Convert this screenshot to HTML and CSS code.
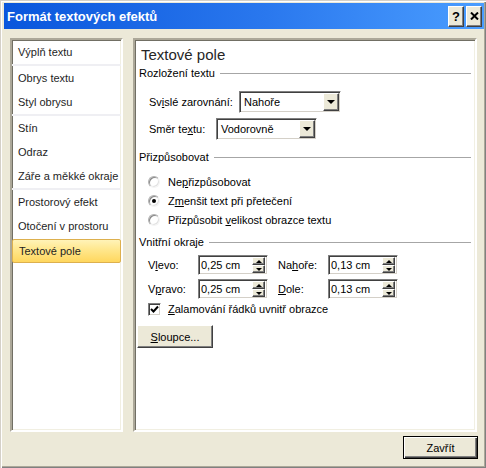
FILE: index.html
```html
<!DOCTYPE html>
<html lang="cs">
<head>
<meta charset="utf-8">
<title>Formát textových efektů</title>
<link rel="stylesheet" href="styles.css">
</head>
<body>
<div class="window">
  <div class="titlebar">
    <span class="title">Formát textových efektů</span>
    <div class="tb-buttons">
      <span class="tb-btn tb-help">?</span>
      <span class="tb-btn tb-close">
        <svg width="9" height="8" viewBox="0 0 9 8"><path d="M1 0.5 L8 7.5 M8 0.5 L1 7.5" stroke="#000" stroke-width="2" fill="none"/></svg>
      </span>
    </div>
  </div>
  <div class="main">
    <ul class="nav">
      <li class="nav-item">Výplň textu</li>
      <li class="nav-sep"></li>
      <li class="nav-item">Obrys textu</li>
      <li class="nav-item">Styl obrysu</li>
      <li class="nav-sep"></li>
      <li class="nav-item">Stín</li>
      <li class="nav-item">Odraz</li>
      <li class="nav-item">Záře a měkké okraje</li>
      <li class="nav-sep"></li>
      <li class="nav-item">Prostorový efekt</li>
      <li class="nav-item">Otočení v prostoru</li>
      <li class="nav-item nav-active">Textové pole</li>
    </ul>
    <div class="panel">
      <h1 class="heading">Textové pole</h1>

      <div class="section-title sec-first"><span>Rozložení textu</span></div>
      <div class="field-row row-valign">
        <span class="lbl lbl-valign">Sv<u>i</u>slé zarovnání:</span>
        <div class="combo combo-valign">
          <span class="combo-text">Nahoře</span>
          <span class="combo-btn"><i class="tri-down"></i></span>
        </div>
      </div>
      <div class="field-row row-dir">
        <span class="lbl lbl-dir">Směr te<u>x</u>tu:</span>
        <div class="combo combo-dir">
          <span class="combo-text">Vodorovně</span>
          <span class="combo-btn"><i class="tri-down"></i></span>
        </div>
      </div>

      <div class="section-title sec-fit"><span>Přizpůsobovat</span></div>
      <div class="radio-list">
        <div class="radio-row"><span class="radio"></span><span>Ne<u>p</u>řizpůsobovat</span></div>
        <div class="radio-row"><span class="radio radio-on"></span><span>Z<u>m</u>enšit text při přetečení</span></div>
        <div class="radio-row"><span class="radio"></span><span>Přizpůsobit <u>v</u>elikost obrazce textu</span></div>
      </div>

      <div class="section-title sec-margin"><span>Vnitřní okraje</span></div>
      <div class="spin-row spin-row-1">
        <span class="spin-lbl">V<u>l</u>evo:</span>
        <div class="spin"><span class="spin-text">0,25 cm</span><span class="spin-btns"><span class="spin-btn"><i class="tri-up"></i></span><span class="spin-btn"><i class="tri-dn"></i></span></span></div>
        <span class="spin-lbl spin-lbl-2">Na<u>h</u>oře:</span>
        <div class="spin"><span class="spin-text">0,13 cm</span><span class="spin-btns"><span class="spin-btn"><i class="tri-up"></i></span><span class="spin-btn"><i class="tri-dn"></i></span></span></div>
      </div>
      <div class="spin-row spin-row-2">
        <span class="spin-lbl">V<u>p</u>ravo:</span>
        <div class="spin"><span class="spin-text">0,25 cm</span><span class="spin-btns"><span class="spin-btn"><i class="tri-up"></i></span><span class="spin-btn"><i class="tri-dn"></i></span></span></div>
        <span class="spin-lbl spin-lbl-2"><u>D</u>ole:</span>
        <div class="spin"><span class="spin-text">0,13 cm</span><span class="spin-btns"><span class="spin-btn"><i class="tri-up"></i></span><span class="spin-btn"><i class="tri-dn"></i></span></span></div>
      </div>
      <div class="check-row">
        <span class="checkbox"><svg width="9" height="9" viewBox="0 0 9 9"><path d="M1 4 L3.5 6.5 L8 1.5" stroke="#000" stroke-width="2" fill="none"/></svg></span>
        <span><u>Z</u>alamování řádků uvnitř obrazce</span>
      </div>
      <button class="btn btn-columns"><u>S</u>loupce...</button>
    </div>
  </div>
  <div class="footer">
    <button class="btn btn-default">Zavřít</button>
  </div>
</div>
</body>
</html>
```
FILE: styles.css
```css
* { box-sizing: border-box; }
html, body { margin: 0; padding: 0; }
body {
  font-family: "Liberation Sans", Arial, sans-serif;
  font-size: 11px;
  color: #000;
  background: #ECE9D8;
}
u { text-decoration: underline; text-underline-offset: 1px; }

.window {
  width: 486px;
  height: 468px;
  background: #ECE9D8;
  padding: 3px 2px 2px 4px;
  display: flex;
  flex-direction: column;
  box-shadow: inset 1px 1px 0 #D4D0C8, inset 2px 2px 0 #fff, inset -1px -1px 0 #808080, inset -2px -2px 0 #ACA899;
}

.titlebar {
  height: 26px;
  flex: none;
  display: flex;
  align-items: center;
  justify-content: space-between;
  padding: 0 2px 0 3px;
  background: linear-gradient(to right, #0A56DC 0%, #2A78EE 55%, #4A9DFF 100%);
}
.title {
  color: #fff;
  font-weight: bold;
  font-size: 13px;
  line-height: 13px;
  white-space: nowrap;
}
.tb-buttons { display: flex; gap: 2px; }
.tb-btn {
  width: 16px;
  height: 21px;
  background: #ECE9D8;
  border: 1px solid;
  border-color: #fff #404040 #404040 #fff;
  box-shadow: inset -1px -1px 0 #808080;
  display: flex;
  align-items: center;
  justify-content: center;
  font-weight: bold;
  font-size: 13px;
  line-height: 13px;
}

.main {
  flex: none;
  display: flex;
  gap: 10px;
  padding: 9px 7px 0 6px;
  height: 403px;
}

.nav {
  list-style: none;
  margin: 0;
  padding: 0;
  width: 113px;
  height: 394px;
  background: #fff;
  border: 2px solid;
  border-color: #ACA899 #fff #fff #ACA899;
  box-shadow: inset 1px 1px 0 #716F64, inset -1px -1px 0 #F1EFE2;
  color: #1e1e1e;
}
.nav-item {
  height: 24px;
  line-height: 24px;
  padding-left: 6px;
  white-space: nowrap;
}
.nav-sep {
  height: 2px;
  background: #EFEFF3;
}
.nav-active {
  margin-top: 1px;
  line-height: 22px;
  border: 1px solid #DDB04E;
  border-radius: 2px;
  padding-left: 6px;
  background: linear-gradient(to bottom, #FFF3B8 0%, #FFE890 40%, #FFD75E 100%);
}

.panel {
  width: 344px;
  height: 394px;
  background: #fff;
  border: 2px solid;
  border-color: #ACA899 #fff #fff #ACA899;
  box-shadow: inset 1px 1px 0 #716F64, inset -1px -1px 0 #F1EFE2;
  padding: 6px 4px 0 4px;
  display: flex;
  flex-direction: column;
  align-items: stretch;
}
.heading {
  margin: 0 0 0 2px;
  font-size: 15px;
  line-height: 18px;
  font-weight: normal;
  color: #262626;
}

.section-title {
  display: flex;
  align-items: center;
  height: 13px;
  line-height: 13px;
  white-space: nowrap;
}
.section-title::after {
  content: "";
  flex: 1;
  height: 1px;
  background: #A6A6A6;
  margin-left: 5px;
}
.sec-first { margin-top: 3px; }
.sec-fit { margin-top: 11px; }
.sec-margin { margin-top: 7px; }

.field-row {
  display: flex;
  align-items: center;
  height: 22px;
  padding-left: 10px;
}
.row-valign { margin-top: 11px; }
.row-dir { margin-top: 5px; }
.lbl { white-space: nowrap; }
.lbl-valign { width: 90px; }
.lbl-dir { width: 67px; }

.combo {
  height: 22px;
  display: flex;
  align-items: center;
  background: #fff;
  border: 1px solid;
  border-color: #808080 #fff #fff #808080;
  box-shadow: inset 1px 1px 0 #404040, inset -1px -1px 0 #D4D0C8;
  padding: 1px;
}
.combo-valign { width: 102px; }
.combo-dir { width: 101px; }
.combo-text { flex: 1; padding-left: 3px; white-space: nowrap; }
.combo-btn {
  width: 16px;
  height: 18px;
  background: #ECE9D8;
  border: 1px solid;
  border-color: #fff #404040 #404040 #fff;
  box-shadow: inset -1px -1px 0 #808080;
  display: flex;
  align-items: center;
  justify-content: center;
}
.tri-down {
  width: 0; height: 0;
  border-left: 4px solid transparent;
  border-right: 4px solid transparent;
  border-top: 4px solid #000;
}

.radio-list { margin-top: 8px; }
.radio-row {
  display: flex;
  align-items: center;
  height: 19px;
  padding-left: 9px;
  gap: 8px;
  white-space: nowrap;
}
.radio {
  width: 12px;
  height: 12px;
  border-radius: 50%;
  background: #fff;
  border: 1px solid;
  border-color: #B0B0B0 #F4F4F4 #F4F4F4 #B0B0B0;
  box-shadow: inset 1px 1px 0 #888, inset -1px -1px 0 #E2E2E2;
  position: relative;
  flex: none;
}
.radio-on::after {
  content: "";
  position: absolute;
  left: 3px; top: 3px;
  width: 4px; height: 4px;
  border-radius: 50%;
  background: #000;
}

.spin-row {
  display: flex;
  align-items: center;
  height: 20px;
  padding-left: 9px;
}
.spin-row-1 { margin-top: 6px; }
.spin-row-2 { margin-top: 4px; }
.spin-lbl { width: 50px; white-space: nowrap; }
.spin-lbl-2 { margin-left: 10px; }
.spin {
  width: 70px;
  height: 20px;
  display: flex;
  align-items: center;
  background: #fff;
  border: 1px solid;
  border-color: #808080 #fff #fff #808080;
  box-shadow: inset 1px 1px 0 #404040, inset -1px -1px 0 #D4D0C8;
  padding: 1px 2px 1px 1px;
}
.spin-text { flex: 1; padding-left: 1px; white-space: nowrap; }
.spin-btns {
  display: flex;
  flex-direction: column;
  width: 13px;
  height: 16px;
}
.spin-btn {
  flex: 1;
  background: #ECE9D8;
  border: 1px solid;
  border-color: #fff #404040 #404040 #fff;
  box-shadow: inset -1px -1px 0 #808080;
  display: flex;
  align-items: center;
  justify-content: center;
}
.tri-up {
  width: 0; height: 0;
  border-left: 3px solid transparent;
  border-right: 3px solid transparent;
  border-bottom: 3px solid #000;
}
.tri-dn {
  width: 0; height: 0;
  border-left: 3px solid transparent;
  border-right: 3px solid transparent;
  border-top: 3px solid #000;
}

.check-row {
  display: flex;
  align-items: center;
  height: 16px;
  margin-top: 2px;
  padding-left: 9px;
  gap: 7px;
  white-space: nowrap;
}
.checkbox {
  width: 13px;
  height: 13px;
  background: #fff;
  border: 1px solid;
  border-color: #808080 #fff #fff #808080;
  box-shadow: inset 1px 1px 0 #404040, inset -1px -1px 0 #D4D0C8;
  display: flex;
  align-items: center;
  justify-content: center;
  flex: none;
}

.btn {
  font-family: inherit;
  font-size: 11px;
  color: #000;
  background: #ECE9D8;
  border: 1px solid;
  border-color: #fff #404040 #404040 #fff;
  box-shadow: inset -1px -1px 0 #808080;
  height: 23px;
  padding: 0;
  margin: 0;
  white-space: nowrap;
}
.btn-columns {
  width: 76px;
  margin-top: 8px;
  margin-left: -2px;
  align-self: flex-start;
}

.footer {
  display: flex;
  justify-content: flex-end;
  padding: 4px 6px 0 0;
}
.btn-default {
  width: 75px;
  border: 1px solid #000;
  box-shadow: inset 1px 1px 0 #fff, inset -1px -1px 0 #404040, inset -2px -2px 0 #808080;
}
```
